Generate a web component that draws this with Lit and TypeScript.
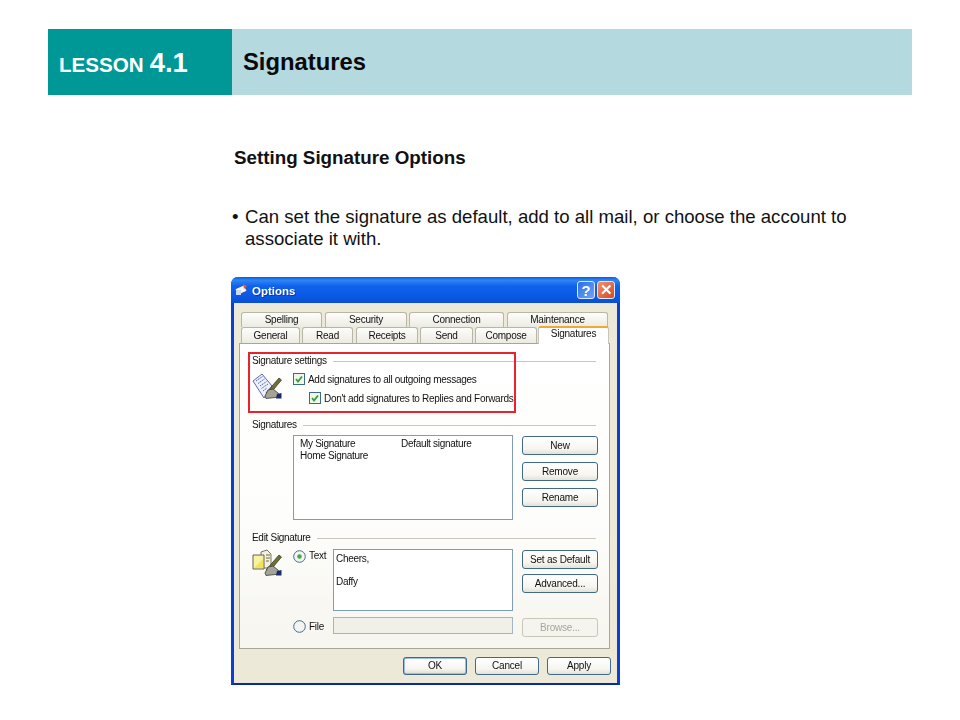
import { LitElement, html, css, svg } from "lit";
import { customElement } from "lit/decorators.js";

const ROW1 = [
  { t: "Spelling", w: 81, g: 3 },
  { t: "Security", w: 82, g: 2 },
  { t: "Connection", w: 95, g: 3 },
  { t: "Maintenance", w: 101, g: 0 },
];
const ROW2 = [
  { t: "General", w: 59, g: 2 },
  { t: "Read", w: 51, g: 3 },
  { t: "Receipts", w: 62, g: 2 },
  { t: "Send", w: 53, g: 2 },
  { t: "Compose", w: 62, g: 1 },
];

const penHand = svg`<g transform="translate(1,-3)">
  <path d="M13 24 L26 9 L28.500 11 L16 26 Z" fill="#6f6f3a" stroke="#33331a" stroke-width=".7"/>
  <path d="M12 27 L15 21 L20 20 L25 24 L27 28 L13 29.500 Z" fill="#a3a397" stroke="#3d3d36" stroke-width=".8"/>
  <path d="M24 25 L28.500 24 L28.500 29.500 L23 29.500 Z" fill="#1a2a6e"/>
</g>`;

const sigIcon = svg`<svg class="ico" viewBox="0 0 31 31" width="31" height="31">
  <path d="M1 9 L10 2 L20 14 L12 26 Z" fill="#eef1fb" stroke="#4a5aa8" stroke-width=".9"/>
  <g stroke="#5468b8" stroke-width="1" stroke-dasharray="1.5 .7" fill="none">
    <path d="M4 9 L10.500 4.500"/><path d="M6 11.500 L12.500 7"/><path d="M8 14 L14.500 9.500"/><path d="M9.500 16.500 L16 12"/><path d="M11 19 L15 16"/>
  </g>
  ${penHand}
</svg>`;

const editIcon = svg`<svg class="ico" viewBox="0 0 31 31" width="31" height="31">
  <path d="M9 3 L15 1 L19 5 L19 19 L9 19 Z" fill="#f2f0e0" stroke="#55554a" stroke-width=".8"/>
  <g stroke="#7a6a2a" stroke-width="1"><path d="M14 6 H18"/><path d="M14 9 H18"/><path d="M14 12 H17"/></g>
  <path d="M1 6 H12 V20 H1 Z" fill="#f7f3a0" stroke="#55554a" stroke-width=".9"/>
  <path d="M2 19 L11 19 L11 10 Z" fill="#efe25c"/>
  ${penHand}
</svg>`;

const check = html`<svg class="chk" viewBox="0 0 12 12" width="12" height="12">
  <rect x=".5" y=".5" width="11" height="11" fill="#f2f5ec" stroke="#3c6a8a"/>
  <path d="M3 6 L5 8.500 L9 3.500" fill="none" stroke="#2fa12f" stroke-width="1.800"/>
</svg>`;

const radio = (on: boolean) => html`<svg class="rad" viewBox="0 0 13 13" width="13" height="13">
  <circle cx="6.500" cy="6.500" r="5.800" fill="#f4f5f0" stroke="#3f6c90" stroke-width="1"/>
  ${on ? svg`<circle cx="6.500" cy="6.500" r="2.300" fill="#45a845"/>` : ""}
</svg>`;

@customElement("app-root")
export class AppRoot extends LitElement {
  static styles = css`
    :host { display: block; height: 720px; background: #fff; overflow: hidden; font-family: "Liberation Sans", Arial, sans-serif; color: #111; }
    .head { display: flex; height: 66px; margin: 29px 48px 0; }
    .lesson { width: 184px; background: #009797; color: #fff; font-weight: 700; display: flex; align-items: baseline; padding: 19px 0 0 11px; box-sizing: border-box; line-height: 30px; }
    .lesson .a { font-size: 20.500px; }
    .lesson .b { font-size: 20.600px; }
    .lesson .n { font-size: 27.500px; margin-left: 6px; }
    .title { flex: 1; background: #b4d9df; color: #0a0a0a; font-weight: 700; font-size: 23.800px; padding: 19px 0 0 11px; box-sizing: border-box; }
    .sub { margin: 52px 0 0 234px; font-weight: 700; font-size: 18.800px; line-height: 22px; }
    .bul { margin: 37px 0 0 232px; font-size: 18.600px; line-height: 22px; display: flex; width: 640px; }
    .bul i { font-style: normal; width: 13px; flex: none; }
    .win { position: relative; margin: 27px 0 0 231px; width: 389px; height: 408px; box-sizing: border-box; background: #ece9d8; border: 3px solid #0a3fd2; border-top: 0; border-bottom-width: 2px; border-bottom-color: #0a2aa0; border-radius: 7px 7px 0 0; filter: blur(.45px); }
    .tb { display: flex; align-items: center; height: 26px; margin: 0 -3px; padding: 0 5px 0 3px; background: linear-gradient(#0a5ae0, #2f86f5 12%, #0f62ea 35%, #0a58e4 75%, #0a4fd0); border-radius: 7px 7px 0 0; color: #fff; font-weight: 700; font-size: 11.500px; }
    .tb .ti { width: 15px; height: 14px; margin-right: 3px; flex: none; }
    .tb .nm { flex: 1; text-shadow: 1px 1px 0 #0a3aa8; padding-top: 2px; }
    .wb { width: 18px; height: 18px; border: 1px solid #dfe8ff; border-radius: 3px; box-sizing: border-box; margin-left: 2px; flex: none; display: flex; align-items: center; justify-content: center; color: #fff; font-size: 15px; font-weight: 700; }
    .wb.h { background: linear-gradient(135deg, #2a6fe8, #6fa4f5); }
    .wb.x { background: linear-gradient(135deg, #f09070, #d84a20); }
    .tabs { margin: 9px 2px 0 7px; position: relative; }
    .tr { display: flex; height: 15px; font-size: 10px; letter-spacing: -.25px; }
    .tab { box-sizing: border-box; height: 100%; border: 1px solid #b8b6a8; border-bottom: 0; border-radius: 3px 3px 0 0; background: linear-gradient(#fdfdfb, #ecebe2); text-align: center; line-height: 14px; flex: none; }
    .tr.r2 { height: 17px; }
    .tr.r2 .tab { height: 16px; line-height: 16px; }
    .tab.on { height: 18px !important; margin-top: -1px; line-height: 12px !important; background: #fff; border-color: #c8c6b8; border-top: 2px solid #f0a838; position: relative; z-index: 1; width: 71px; }
    .panel { box-sizing: border-box; height: 306px; margin: -1px 7px 0 5px; border: 1px solid #a8a698; background: linear-gradient(#ffffff, #fdfdfb 60%, #f6f5ef); padding: 11px 0 0 12px; font-size: 10px; letter-spacing: -.3px; position: relative; }
    .leg { display: flex; align-items: center; gap: 6px; height: 12px; line-height: 12px; width: 344px; }
    .leg::after { content: ""; flex: 1; height: 1px; background: #c9c7bb; }
    .s1 { display: flex; margin-top: 5px; height: 47px; }
    .icw { width: 41px; flex: none; }
    .ico { display: block; }
    .ck { display: flex; align-items: center; gap: 3px; height: 12px; margin-top: 1px; }
    .ck.in { margin: 7px 0 0 16px; }
    .chk, .rad { flex: none; display: block; }
    .red { position: absolute; left: 8px; top: 8px; width: 268px; height: 61px; box-sizing: border-box; border: 2px solid #e8232e; }
    .s2 { display: flex; margin-top: 4px; padding-left: 41px; gap: 9px; height: 85px; }
    .list { box-sizing: border-box; flex: none; width: 220px; height: 85px; border: 1px solid #7f9db9; background: #fff; padding: 2px 0 0 6px; display: grid; grid-template-columns: 101px 1fr; grid-auto-rows: 12px; line-height: 12px; }
    .col { display: flex; flex-direction: column; gap: 7px; width: 76px; padding-top: 1px; flex: none; }
    .btn { box-sizing: border-box; width: 76px; height: 19px; border: 1px solid #3f6a88; border-radius: 3px; background: linear-gradient(#fff, #f6f5ef 70%, #e4e2d6); text-align: center; line-height: 17px; font-size: 10px; letter-spacing: -.2px; flex: none; }
    .btn.off { border-color: #c9c7b8; color: #a8a69a; background: #f5f4ee; }
    .leg.e { margin-top: 12px; }
    .s3 { display: grid; grid-template-columns: 41px 40px 180px 76px; grid-template-rows: 62px 17px; row-gap: 6px; margin-top: 5px; }
    .s3 .col { margin-left: 9px; gap: 5px; }
    .rd { display: flex; gap: 3px; align-items: flex-start; line-height: 12px; }
    .rd .rad { margin-top: 1px; }
    .rd span { margin-top: 1px; }
    .ta { box-sizing: border-box; border: 1px solid #7f9db9; background: #fff; padding: 3px 0 0 2px; }
    .ta div { height: 23px; line-height: 12px; }
    .fi { box-sizing: border-box; border: 1px solid #a3b5c4; background: #f0efe8; }
    .s3 .btn.off { margin: 1px 0 0 9px; }
    .rd.f { margin-top: 2px; }
    .rd.f span { margin-top: 2px; }
    .foot { display: flex; justify-content: flex-end; gap: 8px; margin: 8px 6px 0 0; }
    .foot .btn { width: 64px; height: 18px; line-height: 16px; }
    .foot .btn.d { border: 2px solid #9dbbe8; line-height: 14px; outline: 1px solid #3f6a88; outline-offset: -1px; }
  `;

  render() {
    return html`
      <div class="head">
        <div class="lesson"><span class="a">L</span><span class="b">ESSON</span><span class="n">4.1</span></div>
        <div class="title">Signatures</div>
      </div>
      <div class="sub">Setting Signature Options</div>
      <div class="bul"><i>•</i><span>Can set the signature as default, add to all mail, or choose the account to associate it with.</span></div>
      <div class="win">
        <div class="tb">
          <svg class="ti" viewBox="0 0 15 14">
            <path d="M1 6 L10 2 L13 8 L4 12 Z" fill="#f2f5ff" stroke="#23408a" stroke-width=".7"/>
            <path d="M9 1 L13 3 L10 6 Z" fill="#e35a4a"/>
            <path d="M2 7 L7 7 L7 12 L2 12 Z" fill="#c9d8f5"/>
          </svg>
          <span class="nm">Options</span>
          <span class="wb h">?</span>
          <span class="wb x">✕</span>
        </div>
        <div class="tabs">
          <div class="tr r1">
            ${ROW1.map((t) => html`<div class="tab" style="width:${t.w}px;margin-right:${t.g}px">${t.t}</div>`)}
          </div>
          <div class="tr r2">
            ${ROW2.map((t) => html`<div class="tab" style="width:${t.w}px;margin-right:${t.g}px">${t.t}</div>`)}
            <div class="tab on">Signatures</div>
          </div>
        </div>
        <div class="panel">
          <div class="leg">Signature settings</div>
          <div class="s1">
            <div class="icw">${sigIcon}</div>
            <div>
              <div class="ck">${check}<span>Add signatures to all outgoing messages</span></div>
              <div class="ck in">${check}<span>Don't add signatures to Replies and Forwards</span></div>
            </div>
          </div>
          <div class="red"></div>
          <div class="leg">Signatures</div>
          <div class="s2">
            <div class="list">
              <span>My Signature</span><span>Default signature</span>
              <span>Home Signature</span><span></span>
            </div>
            <div class="col">
              <div class="btn">New</div>
              <div class="btn">Remove</div>
              <div class="btn">Rename</div>
            </div>
          </div>
          <div class="leg e">Edit Signature</div>
          <div class="s3">
            <div>${editIcon}</div>
            <div class="rd">${radio(true)}<span>Text</span></div>
            <div class="ta"><div>Cheers,</div><div>Daffy</div></div>
            <div class="col">
              <div class="btn">Set as Default</div>
              <div class="btn">Advanced...</div>
            </div>
            <div></div>
            <div class="rd f">${radio(false)}<span>File</span></div>
            <div class="fi"></div>
            <div class="btn off">Browse...</div>
          </div>
        </div>
        <div class="foot">
          <div class="btn d">OK</div>
          <div class="btn">Cancel</div>
          <div class="btn">Apply</div>
        </div>
      </div>
    `;
  }
}
